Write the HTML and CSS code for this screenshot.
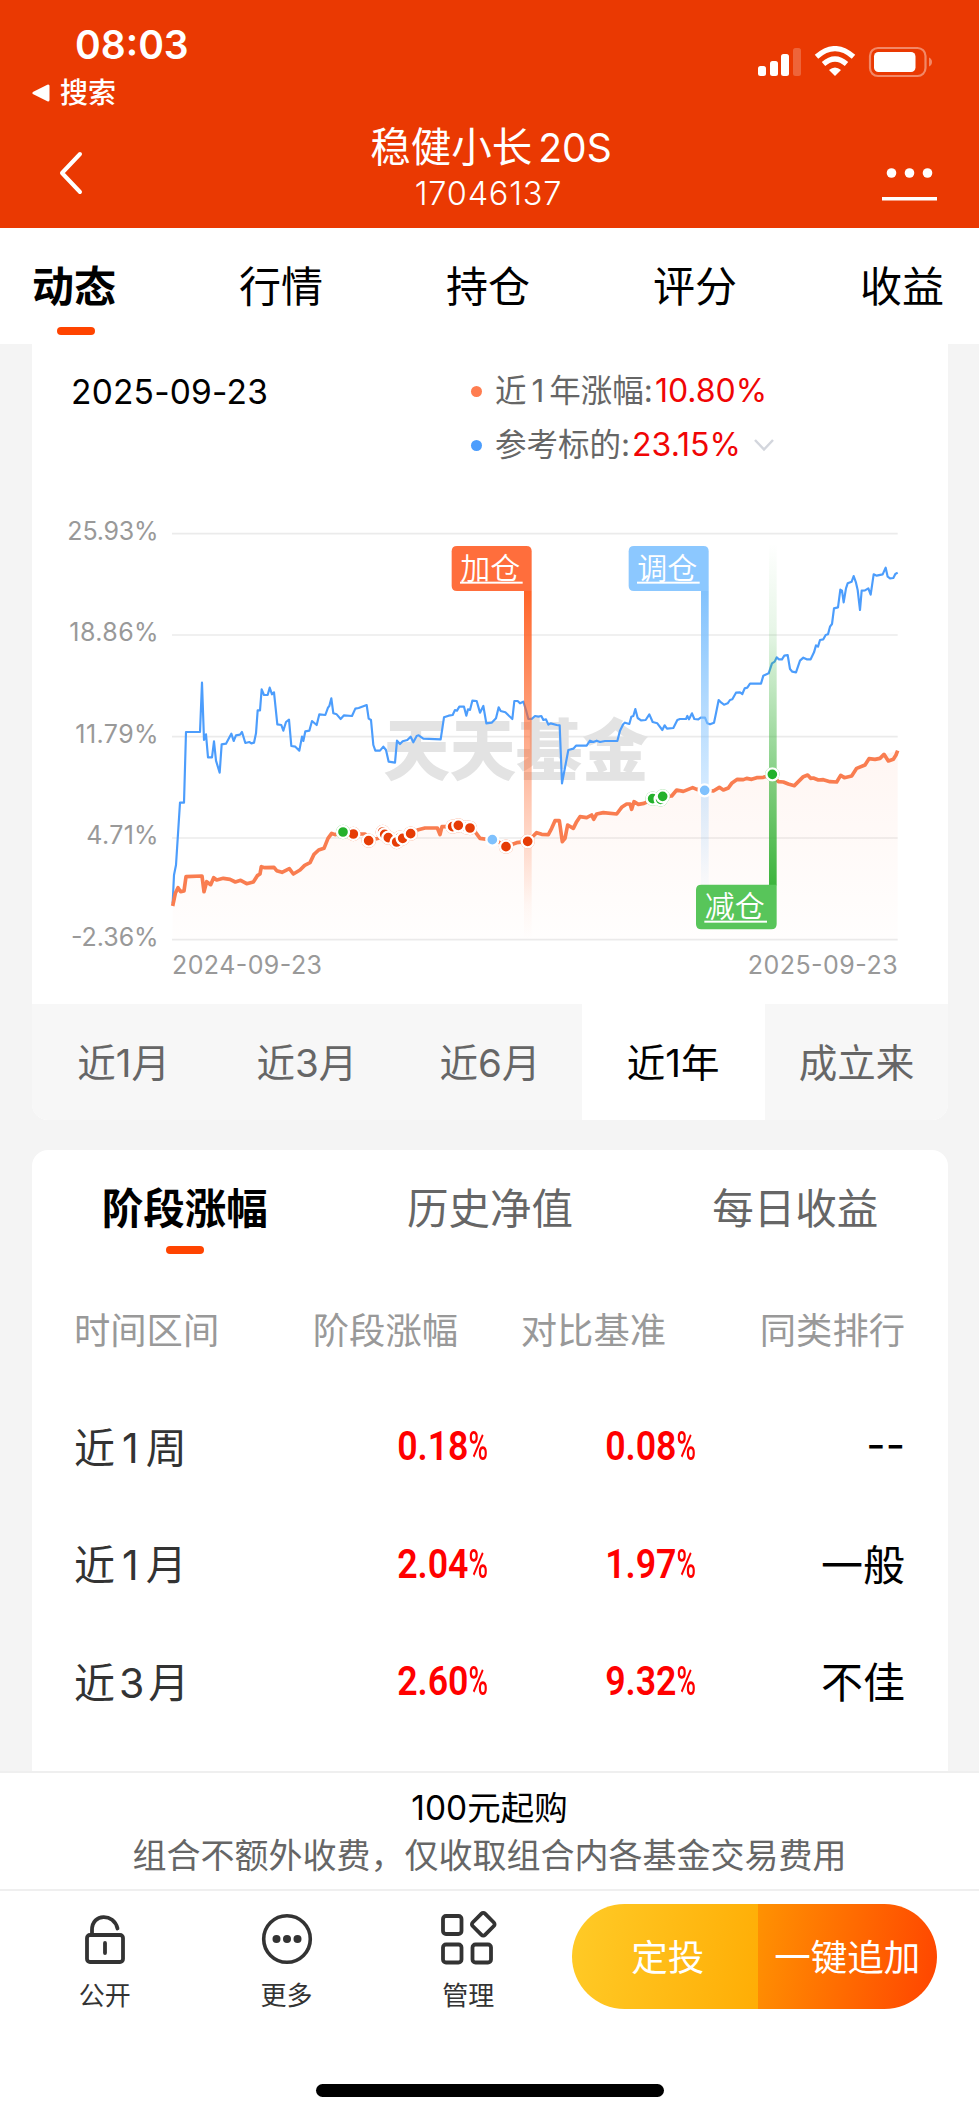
FILE: index.html
```
<!DOCTYPE html>
<html lang="zh-CN">
  <head>
    <meta charset="UTF-8" />
    <meta name="viewport" content="width=device-width, initial-scale=1.0" />
    <title>稳健小长 20S</title>
    <link rel="stylesheet" href="styles.css">
  </head>
  <body>
    <header class="header">
      <div class="status">
        <div class="status-left">
          <div class="time">08:03</div>
          <div class="back-app">
            <svg width="18" height="18" viewBox="0 0 18 18"><path d="M2 9 L16 2 V16 Z" fill="#fff" stroke="#fff" stroke-width="3" stroke-linejoin="round" /></svg>
            <span>搜索</span>
          </div>
        </div>
        <svg class="status-icons" width="176" height="32" viewBox="0 0 176 32">
          <g fill="#fff">
            <rect x="0" y="20" width="8" height="10" rx="2.5" />
            <rect x="12" y="15" width="8" height="15" rx="2.5" />
            <rect x="23" y="8" width="8" height="22" rx="2.5" />
            <rect x="35" y="2" width="8" height="28" rx="2.5" opacity="0.22" />
            <path d="M77 30 L71 24 Q77 19 83 24 Z" />
            <rect x="116" y="6" width="41.500" height="20" rx="4.500" />
            <path d="M171 11.500 Q174 13 174 16 T171 20.500 Z" opacity="0.4" />
          </g>
          <g fill="none" stroke="#fff" stroke-width="5.200">
            <path d="M58.500 10.800 Q77 -5.500 95.500 10.800" />
            <path d="M65.500 18 Q77 8 88.500 18" />
          </g>
          <rect x="112" y="2" width="55.500" height="28" rx="8" fill="none" stroke="#fff" stroke-width="2.200" opacity="0.4" />
        </svg>
      </div>
      <div class="navbar">
        <svg width="24" height="44" viewBox="0 0 24 44"><path d="M21 3 L3 22 L21 41" fill="none" stroke="#fff" stroke-width="4" stroke-linecap="round" stroke-linejoin="round" /></svg>
        <div class="title">
          <h1>稳健小长<span>20S</span></h1>
          <p>17046137</p>
        </div>
        <svg width="56" height="36" viewBox="0 0 56 36" fill="#fff">
          <circle cx="9.500" cy="6" r="4.800" />
          <circle cx="27.500" cy="6" r="4.800" />
          <circle cx="45.500" cy="6" r="4.800" />
          <rect x="0" y="30" width="55" height="3.500" />
        </svg>
      </div>
    </header>

    <nav class="tabs">
      <a class="active">动态</a>
      <a>行情</a>
      <a>持仓</a>
      <a>评分</a>
      <a>收益</a>
    </nav>

    <main>
      <section class="card chart-card">
        <div class="summary">
          <div class="date">2025-09-23</div>
          <ul class="legend">
            <li><i class="dot orange"></i>近<b>1</b>年涨幅:<em>10.80%</em></li>
            <li>
              <i class="dot blue"></i>参考标的:<em>23.15%</em>
              <svg width="22" height="14" viewBox="0 0 22 14"><path d="M2 2 L11 11.500 L20 2" fill="none" stroke="#d3d6dd" stroke-width="2.500" /></svg>
            </li>
          </ul>
        </div>

        <svg class="chart" viewBox="-354 -120 2748 1572">
          <defs>
            <linearGradient id="area" x1="0" y1="0" x2="0" y2="1">
              <stop offset="0" stop-color="#ff7d50" stop-opacity="0.070" />
              <stop offset="1" stop-color="#ff7d50" stop-opacity="0.01" />
            </linearGradient>
            <linearGradient id="poleRed" x1="0" y1="0" x2="0" y2="1">
              <stop offset="0" stop-color="#ff6428" />
              <stop offset="0.900" stop-color="#ff6428" stop-opacity="0.04" />
              <stop offset="1" stop-color="#ff6428" stop-opacity="0" />
            </linearGradient>
            <linearGradient id="poleBlue" x1="0" y1="0" x2="0" y2="1">
              <stop offset="0" stop-color="#82c2fd" />
              <stop offset="1" stop-color="#8cc8ff" stop-opacity="0" />
            </linearGradient>
            <linearGradient id="poleGreen" x1="0" y1="0" x2="0" y2="1">
              <stop offset="0" stop-color="#3cb43c" stop-opacity="0" />
              <stop offset="0.250" stop-color="#3cb43c" stop-opacity="0.120" />
              <stop offset="1" stop-color="#3cb43c" />
            </linearGradient>
          </defs>

          <path class="grid" d="M66 41 H2243 M66 345 H2243 M66 650 H2243 M66 954 H2243 M66 1259 H2243" />

          <g class="axis" text-anchor="end">
            <text x="26" y="60" textLength="274">25.93%</text>
            <text x="26" y="364" textLength="268">18.86%</text>
            <text x="26" y="669" textLength="250">11.79%</text>
            <text x="26" y="973" textLength="217">4.71%</text>
            <text x="26" y="1278" textLength="263">-2.36%</text>
            <text x="2243" y="1362" textLength="450">2025-09-23</text>
          </g>
          <text class="axis" x="66" y="1362" textLength="450">2024-09-23</text>

          <text class="watermark" x="700" y="766" textLength="796">天天基金</text>

          <path fill="url(#area)" d="M68 1158 L108 1070 156 1068 170 1090 220 1075 290 1091 334 1040 372 1042 430 1062 480 1028 522 985 545 940 645 942 740 966 805 929 925 916 990 955 1068 980 1160 938 1195 944 1215 902 1237 965 1290 890 1400 882 1482 850 1580 812 1664 810 1735 804 1762 778 1867 770 1933 797 1973 765 2060 786 2105 768 2157 716 2243 692 V1259 H68 Z" />

          <polyline class="line blue-line" points="68,1150 72,1065 78,1035 90,848 102,848 108,636 150,636 156,488 162,660 168,643 174,712 186,712 192,664 198,722 209,758 215,673 228,671 244,641 251,663 258,646 270,644 276,636 286,669 298,666 304,670 312,668 318,640 323,571 330,571 335,508 342,525 353,525 359,503 366,523 372,517 382,613 394,615 400,632 408,606 417,599 424,678 436,680 448,692 456,650 460,663 466,634 478,632 486,603 500,615 508,583 526,585 534,563 538,558 544,535 550,580 560,583 572,597 582,586 606,588 616,566 626,564 650,555 656,596 663,600 670,675 676,692 690,692 700,680 708,690 716,725 735,728 741,662 750,672 758,664 772,660 782,650 790,667 800,648 806,646 820,656 872,658 882,592 896,587 908,585 915,570 921,572 928,560 942,560 949,587 954,568 960,570 967,542 980,543 990,578 1000,558 1009,610 1025,608 1038,595 1046,562 1052,573 1066,577 1087,597 1093,543 1103,543 1110,550 1120,545 1128,570 1135,597 1145,597 1155,588 1165,590 1174,588 1180,600 1188,598 1195,614 1202,610 1220,615 1229,616 1236,790 1255,690 1270,686 1278,677 1310,677 1320,662 1330,666 1340,662 1350,666 1365,663 1402,663 1410,632 1420,612 1425,608 1438,612 1444,590 1450,588 1456,567 1463,594 1473,601 1487,600 1498,583 1508,606 1522,610 1537,630 1544,616 1551,626 1570,624 1582,600 1590,597 1608,597 1612,588 1617,598 1626,580 1633,597 1645,598 1652,593 1665,593 1672,610 1680,613 1692,608 1698,580 1706,540 1714,548 1722,554 1733,550 1740,540 1747,538 1758,518 1770,517 1777,522 1784,505 1792,503 1800,491 1833,491 1840,467 1856,460 1866,430 1874,425 1880,412 1887,418 1896,418 1903,407 1913,405 1920,447 1927,455 1938,457 1950,422 1960,413 1970,418 1982,418 1992,397 1998,376 2004,380 2010,360 2020,358 2027,345 2034,343 2040,320 2046,312 2052,265 2064,262 2071,209 2076,212 2081,247 2088,205 2093,190 2105,185 2111,168 2118,188 2123,210 2130,270 2135,212 2145,211 2155,205 2162,224 2171,163 2180,167 2198,163 2207,143 2213,170 2220,175 2230,174 2236,162 2243,158" />

          <polyline class="line orange-line" points="68,1158 76,1120 84,1103 92,1115 102,1113 108,1070 156,1068 162,1115 170,1085 182,1094 191,1073 200,1080 220,1075 240,1078 256,1086 272,1081 290,1091 310,1086 322,1067 330,1062 334,1040 345,1043 372,1042 380,1052 396,1057 418,1046 430,1062 450,1050 464,1036 480,1028 492,1003 506,990 522,985 534,955 545,940 555,944 579,936 610,942 645,942 656,962 685,955 700,935 715,952 740,966 758,955 782,942 805,929 825,924 862,924 870,944 876,920 910,920 925,916 960,924 975,935 990,955 1025,960 1045,965 1068,980 1100,968 1133,964 1150,948 1160,938 1175,943 1195,944 1205,925 1215,902 1228,902 1237,965 1245,955 1253,915 1270,925 1280,905 1290,890 1310,893 1325,885 1331,898 1340,882 1360,878 1400,882 1415,862 1430,852 1440,852 1445,868 1452,845 1465,853 1482,850 1508,838 1538,830 1565,828 1580,810 1600,814 1628,803 1640,808 1664,810 1690,813 1708,802 1720,810 1735,804 1745,790 1762,778 1780,779 1790,775 1805,778 1820,773 1840,772 1867,764 1885,785 1900,786 1915,792 1933,797 1948,782 1960,770 1973,765 1982,775 1990,774 2005,780 2020,779 2040,785 2060,786 2072,766 2083,773 2105,768 2120,745 2145,735 2157,716 2175,718 2190,715 2202,703 2215,723 2230,718 2238,705 2243,692" />

          <rect x="1122" y="213" width="23" height="1046" fill="url(#poleRed)" />
          <rect x="1653" y="213" width="23" height="920" fill="url(#poleBlue)" />
          <rect x="1857" y="70" width="23" height="1026" fill="url(#poleGreen)" />

          <g class="mark red">
            <circle cx="698" cy="936" r="18" />
            <circle cx="704" cy="943" r="18" />
            <circle cx="750" cy="953" r="18" />
            <circle cx="908" cy="920" r="18" />
            <circle cx="950" cy="922" r="18" />
            <circle cx="610" cy="942" r="18" />
            <circle cx="656" cy="962" r="18" />
            <circle cx="715" cy="953" r="18" />
            <circle cx="740" cy="966" r="18" />
            <circle cx="758" cy="955" r="18" />
            <circle cx="782" cy="941" r="18" />
            <circle cx="925" cy="916" r="18" />
            <circle cx="960" cy="924" r="18" />
            <circle cx="1068" cy="980" r="18" />
            <circle cx="1133" cy="964" r="18" />
          </g>
          <g class="mark green">
            <circle cx="579" cy="936" r="18" />
            <circle cx="1508" cy="836" r="18" />
            <circle cx="1532" cy="838" r="18" />
            <circle cx="1538" cy="829" r="18" />
            <circle cx="1867" cy="763" r="18" />
          </g>
          <g class="mark sky">
            <circle cx="1027" cy="959" r="18" />
            <circle cx="1664" cy="811" r="18" />
          </g>

          <g class="flag">
            <path fill="#ff6e3c" d="M921 78 H1129 Q1145 78 1145 94 V213 H921 Q905 213 905 197 V94 Q905 78 921 78 Z" />
            <text x="931" y="176">加仓</text>
            <rect x="930" y="185" width="188" height="6" />
            <path fill="#8cc8ff" d="M1452 78 H1660 Q1676 78 1676 94 V213 H1452 Q1436 213 1436 197 V94 Q1436 78 1452 78 Z" />
            <text x="1462" y="176">调仓</text>
            <rect x="1461" y="185" width="188" height="6" />
            <path fill="#58c55a" d="M1654 1094 H1880 V1212 Q1880 1228 1864 1228 H1654 Q1638 1228 1638 1212 V1110 Q1638 1094 1654 1094 Z" />
            <text x="1664" y="1192">减仓</text>
            <rect x="1663" y="1202" width="188" height="6" />
          </g>
        </svg>

        <div class="ranges">
          <a>近1月</a>
          <a>近3月</a>
          <a>近6月</a>
          <a class="active">近1年</a>
          <a>成立来</a>
        </div>
      </section>

      <section class="card table-card">
        <div class="sub-tabs">
          <a class="active">阶段涨幅</a>
          <a>历史净值</a>
          <a>每日收益</a>
        </div>
        <div class="row head">
          <span>时间区间</span><span>阶段涨幅</span><span>对比基准</span><span>同类排行</span>
        </div>
        <div class="row">
          <span>近<b>1</b>周</span>
          <span class="num">0.18<small>%</small></span>
          <span class="num">0.08<small>%</small></span>
          <span class="rank">--</span>
        </div>
        <div class="row">
          <span>近<b>1</b>月</span>
          <span class="num">2.04<small>%</small></span>
          <span class="num">1.97<small>%</small></span>
          <span class="rank">一般</span>
        </div>
        <div class="row">
          <span>近<b>3</b>月</span>
          <span class="num">2.60<small>%</small></span>
          <span class="num">9.32<small>%</small></span>
          <span class="rank">不佳</span>
        </div>
      </section>
    </main>

    <footer class="footer">
      <div class="notice">
        <p class="min">100元起购</p>
        <p>组合不额外收费，仅收取组合内各基金交易费用</p>
      </div>
      <div class="actions">
        <a class="action">
          <svg width="58" height="58" viewBox="0 0 58 58" fill="none" stroke="#333" stroke-width="3.800" stroke-linecap="round">
            <rect x="11" y="25" width="36" height="27" rx="3" />
            <path d="M16 25 V20 C16 3 38 3 41.500 18.500 M29 33 V43" />
          </svg>
          <span>公开</span>
        </a>
        <a class="action">
          <svg width="58" height="58" viewBox="0 0 58 58" fill="#333">
            <circle cx="29" cy="29" r="23.300" fill="none" stroke="#333" stroke-width="3.600" />
            <circle cx="18.500" cy="29" r="4" />
            <circle cx="29" cy="29" r="4" />
            <circle cx="39.500" cy="29" r="4" />
          </svg>
          <span>更多</span>
        </a>
        <a class="action">
          <svg width="58" height="58" viewBox="-1 0 58 58" fill="none" stroke="#333" stroke-width="3.800">
            <rect x="3" y="6" width="18.500" height="18" rx="3" />
            <rect x="3" y="34.500" width="18.500" height="18" rx="3" />
            <rect x="32.500" y="34.500" width="18.500" height="18" rx="3" />
            <rect x="34.500" y="5.500" width="17.500" height="17.500" rx="2.500" transform="rotate(45 43.250 14.250)" />
          </svg>
          <span>管理</span>
        </a>
        <div class="buttons">
          <button class="invest">定投</button>
          <button class="add">一键追加</button>
        </div>
      </div>
      <div class="home-bar"></div>
    </footer>
  </body>
</html>
```
FILE: styles.css
```
* {
  box-sizing: border-box;
  margin: 0;
  padding: 0;
}
body {
  width: 979px;
  height: 2117px;
  display: flex;
  flex-direction: column;
  overflow: hidden;
  background-color: #f4f4f4;
  color: #000;
  font-family: Inter, "Noto Sans CJK SC", sans-serif;
  font-weight: 400;
}
svg {
  display: block;
  flex-shrink: 0;
}

/* header */
.header {
  height: 228px;
  flex-shrink: 0;
  background-color: #ea3902;
  color: #fff;
}
.status {
  height: 116px;
  display: flex;
  justify-content: space-between;
  padding: 20px 45px 0 32px;
}
.time {
  padding-left: 43px;
  font-size: 39px;
  font-weight: 560;
  line-height: 49px;
}
.back-app {
  display: flex;
  align-items: center;
  gap: 10px;
  margin-top: 4px;
  font-size: 28px;
  font-weight: 500;
  line-height: 40px;
}
.status-icons {
  margin-top: 26px;
}
.navbar {
  height: 112px;
  display: flex;
  justify-content: space-between;
  padding: 0 41px 0 59px;
}
.navbar > svg {
  margin-top: 35px;
}
.navbar > svg:last-child {
  margin-top: 51px;
}
.title {
  text-align: center;
  padding-left: 17px;
}
.title h1 {
  font-size: 40.5px;
  font-weight: 400;
  line-height: 64px;
}
.title h1 span {
  margin-left: 6px;
  font-size: 39px;
}
.title p {
  margin-left: -5px;
  font-size: 32.5px;
  font-weight: 350;
  line-height: 28px;
  letter-spacing: 0.8px;
}

/* page tabs */
.tabs {
  height: 116px;
  flex-shrink: 0;
  display: flex;
  justify-content: space-between;
  padding: 29px 35px 0 32px;
  background-color: #fff;
  font-size: 42px;
  line-height: 60px;
}
.tabs .active,
.sub-tabs .active {
  display: flex;
  flex-direction: column;
  align-items: center;
  color: #000;
  font-weight: 700;
}
.tabs .active::after,
.sub-tabs .active::after {
  content: "";
  width: 38px;
  height: 8px;
  border-radius: 4px;
  margin-top: 10px;
  background-color: #ff4400;
}
.tabs .active::after {
  margin-left: 3px;
}

/* cards */
main {
  flex: 1;
  min-height: 0;
  overflow: hidden;
  padding: 0 31px 0 32px;
}
.card {
  background-color: #fff;
  overflow: hidden;
}
.chart-card {
  height: 776px;
  border-radius: 0 0 16px 16px;
}
.summary {
  height: 136px;
  display: flex;
  padding: 20px 0 0 39px;
}
.date {
  width: 400px;
  font-size: 33.5px;
  line-height: 57px;
  letter-spacing: 0.2px;
}
.legend {
  list-style: none;
}
.legend li {
  display: flex;
  align-items: center;
  height: 54px;
  color: #666;
  font-size: 31.5px;
  line-height: 50px;
}
.legend b {
  font-weight: 400;
  margin: 0 5px;
}
.legend em {
  margin-left: 2px;
  color: #f00505;
  font-style: normal;
  font-size: 32px;
}
.legend svg {
  margin-left: 12px;
}
.dot {
  width: 11px;
  height: 11px;
  border-radius: 50%;
  margin-right: 13px;
}
.orange {
  background-color: #ff7d50;
}
.blue {
  background-color: #4c9dfc;
}

/* chart */
.chart {
  width: 916px;
  height: 524px;
}
.grid {
  stroke: #ebebeb;
  stroke-width: 5;
}
.axis {
  fill: #999;
  font-size: 75px;
}
.watermark {
  fill: #e3e3e3;
  font-size: 200px;
  font-weight: 900;
}
.line {
  fill: none;
  stroke-linejoin: round;
}
.blue-line {
  stroke: #4c9dfc;
  stroke-width: 6.5;
}
.orange-line {
  stroke: #f97d50;
  stroke-width: 11;
}
.mark circle {
  stroke: #fff;
  stroke-width: 7;
}
.red {
  fill: #e63c05;
  filter: drop-shadow(0 0 2px #f97d50);
}
.green {
  fill: #23b12b;
  filter: drop-shadow(0 0 2px #58c55a);
}
.sky {
  fill: #7fc1fd;
}
.flag {
  fill: #fff;
}
.flag text {
  font-size: 90px;
  font-weight: 350;
}

.ranges {
  height: 116px;
  display: grid;
  grid-template-columns: repeat(5, 1fr);
  background-color: #f7f7f7;
  color: #666;
  font-size: 38.5px;
  line-height: 118px;
  text-align: center;
}
.ranges .active {
  background-color: #fff;
  color: #000;
}

/* performance table */
.table-card {
  height: 700px;
  margin-top: 30px;
  border-radius: 16px 16px 0 0;
}
.sub-tabs {
  height: 128px;
  display: grid;
  grid-template-columns: repeat(3, 1fr);
  padding-top: 29px;
  color: #666;
  font-size: 41.5px;
  line-height: 60px;
  text-align: center;
}
.sub-tabs .active::after {
  margin-top: 7px;
}
.row {
  height: 117.5px;
  display: grid;
  grid-template-columns: 201px 183px 208px 239px;
  align-items: center;
  padding-left: 42px;
  color: #333;
  font-size: 41px;
}
.row span {
  text-align: right;
}
.row span:first-child {
  text-align: left;
}
.row b {
  margin: 0 7px;
  font-weight: 400;
}
.row:last-child b {
  margin: 0 4px;
}
.head {
  height: 108px;
  padding-bottom: 8px;
  color: #999;
  font-size: 36.3px;
}
.row .num {
  color: #ff0000;
  font-family: Roboto, sans-serif;
  font-size: 41.5px;
  font-weight: 600;
  transform: translate(32px, 1px) scaleX(0.86);
  transform-origin: right;
}
.num small {
  display: inline-block;
  width: 25px;
  font-size: 41px;
  font-weight: 500;
  transform: scaleX(0.75);
  transform-origin: left;
}
.row .rank {
  color: #000;
  font-size: 42px;
}

/* footer */
.footer {
  height: 346px;
  flex-shrink: 0;
  background-color: #fff;
  border-top: 2px solid #efefef;
}
.notice {
  height: 118px;
  padding-top: 11px;
  border-bottom: 2px solid #efefef;
  color: #666;
  font-size: 34px;
  line-height: 48px;
  text-align: center;
}
.notice .min {
  color: #000;
  font-size: 33.5px;
}
.actions {
  height: 193px;
  display: flex;
  align-items: flex-start;
  padding: 19px 42px 0 14px;
}
.action {
  width: 181.7px;
  display: flex;
  flex-direction: column;
  align-items: center;
  color: #333;
  font-size: 26px;
  line-height: 38px;
}
.action span {
  margin-top: 9px;
}
.buttons {
  width: 365px;
  height: 105px;
  display: flex;
  margin: -6px 0 0 13px;
  border-radius: 53px;
  overflow: hidden;
}
.buttons button {
  flex: 1;
  padding-bottom: 3px;
  border: none;
  color: #fff;
  font-family: inherit;
  font-size: 36.5px;
  white-space: nowrap;
}
.buttons .invest {
  padding-left: 6px;
  background: linear-gradient(100deg, #ffcb27, #ffad05);
}
.add {
  background: linear-gradient(100deg, #ff9202, #ff4400);
}
.home-bar {
  width: 348px;
  height: 13px;
  margin: 0 auto;
  border-radius: 7px;
  background-color: #000;
}
```
